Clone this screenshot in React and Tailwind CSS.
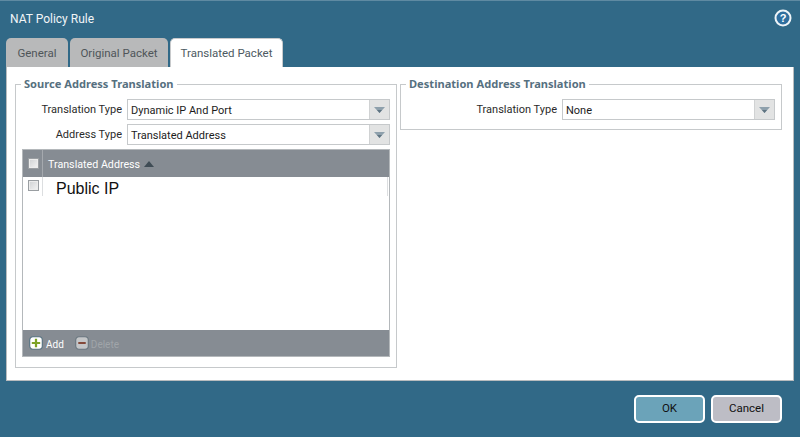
const ui = { fontFamily: 'Roboto, "Noto Sans", sans-serif' };

function Select({ value, className }) {
  return (
    <div className={`flex h-[21px] border border-[#c6c9cb] bg-white ${className}`}>
      <div className="flex-1 pl-[3px] text-[11px] leading-[22px] text-[#1c1c1c]">{value}</div>
      <div className="flex w-5 items-center justify-center border-l border-[#d0d2d3] bg-[#e2e3e3]">
        <svg width="11" height="6" viewBox="0 0 11 6">
          <path d="M0 0H11L5.5 6Z" fill="#8ea0ac" />
          <path d="M3 3H8L5.5 6Z" fill="#5f7482" />
        </svg>
      </div>
    </div>
  );
}

function Row({ label, value, labelW, selectW, className = "" }) {
  return (
    <div className={`flex items-center ${className}`}>
      <div className={`${labelW} pr-[5px] pt-[2px] text-right text-[11px] text-[#2b2b2b]`}>{label}</div>
      <Select value={value} className={selectW} />
    </div>
  );
}

function Check({ className = "" }) {
  return <div className={`h-[11px] w-[11px] border border-[#9a9ea2] bg-gradient-to-br from-[#cfd1d3] to-[#f4f4f4] shadow-[inset_0_0_0_1px_#ececec] ${className}`} />;
}

function Legend({ children }) {
  return <legend className="-ml-[1px] px-[3px] text-[11.1px] font-bold leading-[14px] text-[#56707f]" style={{ fontFamily: '"Noto Sans", sans-serif' }}>{children}</legend>;
}

function Tab({ active, children, className }) {
  return (
    <div className={`flex h-[29px] items-center justify-center rounded-t-[5px] pt-[2px] text-[11.5px] ${className} ${active ? "border border-b-0 border-[#c8cacc] bg-white text-[#4d5a62]" : "bg-[#b8b9ba] text-[#4f5559]"}`}>
      {children}
    </div>
  );
}

export default function App() {
  return (
    <div className="flex h-[437px] w-[800px] flex-col overflow-hidden border-t border-[#5f8aa2] bg-[#316987]" style={ui}>
      <div className="flex h-[37px] items-start justify-between pl-[10px] pr-[8px] pt-[8px]">
        <div className="pt-[1px] text-[12px] leading-[19px] text-[#f1f5f7]">NAT Policy Rule</div>
        <svg width="18" height="18" viewBox="0 0 18 18">
          <circle cx="9" cy="9" r="7.5" fill="#2f6f9f" stroke="#eef4f8" strokeWidth="2" />
          <text x="9" y="13" textAnchor="middle" fontSize="11" fontWeight="700" fill="#ffffff" fontFamily="Liberation Sans, sans-serif">?</text>
        </svg>
      </div>

      <div className="flex pl-[6px]">
        <Tab className="w-[62px]">General</Tab>
        <Tab className="ml-[2px] w-[98px]">Original Packet</Tab>
        <Tab active className="ml-[2px] w-[113px]">Translated Packet</Tab>
      </div>

      <div className="mx-[6px] flex h-[314px] gap-[3px] border-x border-b border-[#b9bcbe] bg-white pl-[8px] pt-[10px]">
        <fieldset className="h-[291px] w-[382px] border border-[#c6c9cb] px-[6px]">
          <Legend>Source Address Translation</Legend>
          <Row className="mt-[8px]" label="Translation Type" value="Dynamic IP And Port" labelW="w-[105px]" selectW="w-[263px]" />
          <Row className="mt-[4px]" label="Address Type" value="Translated Address" labelW="w-[105px]" selectW="w-[263px]" />
          <div className="mt-[4px] flex h-[208px] w-[368px] flex-col border border-[#b4b8bb] bg-white">
            <div className="flex h-[27px] items-center bg-[#868c93]">
              <div className="flex h-full w-[20px] items-center justify-center border-r border-[#a5a9ae] pl-[1px]"><Check /></div>
              <div className="pl-[5px] pt-[4px] text-[10.7px] text-white">Translated Address</div>
              <svg className="ml-[4px]" width="10" height="6" viewBox="0 0 10 6"><path d="M0 6H10L5 0Z" fill="#3f4c55" /></svg>
            </div>
            <div className="flex-1">
              <div className="flex">
                <div className="flex h-[19px] w-[20px] justify-center border-r border-[#dcdee0] pl-[1px] pt-[3px]"><Check /></div>
                <div className="ml-[3px] h-[24px] w-[83px] bg-white pl-[10px] text-[16px] leading-[23px] text-[#111]" style={{ fontFamily: '"Liberation Sans", sans-serif' }}>Public IP</div>
                <div className="ml-auto mr-[1px] h-[19px] border-r border-[#dcdee0]" />
              </div>
            </div>
            <div className="flex h-[26px] items-center bg-[#868c93] pl-[6px]">
              <svg width="14" height="14" viewBox="0 0 15 15">
                <rect x="0.75" y="0.75" width="13.5" height="13.5" rx="3.5" fill="#fff" stroke="#54707f" strokeWidth="1.2" />
                <path d="M7.5 3V12M3 7.5H12" stroke="#7da228" strokeWidth="2.4" />
              </svg>
              <span className="ml-[3px] pt-[2px] text-[10px] text-white">Add</span>
              <svg className="ml-[11px]" width="14" height="14" viewBox="0 0 15 15">
                <rect x="0.75" y="0.75" width="13.5" height="13.5" rx="3.5" fill="#c4c6c8" stroke="#69767f" strokeWidth="1.2" />
                <path d="M3.5 7.5H11.5" stroke="#84493a" strokeWidth="2.2" />
              </svg>
              <span className="ml-[2px] pt-[2px] text-[10px] text-[#a0a5a9]">Delete</span>
            </div>
          </div>
        </fieldset>

        <fieldset className="h-[53px] w-[382px] border border-[#c6c9cb] px-[6px]">
          <Legend>Destination Address Translation</Legend>
          <Row className="mt-[8px]" label="Translation Type" value="None" labelW="w-[155px]" selectW="w-[213px]" />
        </fieldset>
      </div>

      <div className="flex justify-end gap-[6px] pr-[18px] pt-[14px]">
        <button className="h-[28px] w-[71px] rounded-[5px] border-2 border-white bg-[#6ba3b9] text-[11.5px] text-[#111]">OK</button>
        <button className="h-[28px] w-[71px] rounded-[5px] border-2 border-white bg-[#bdbdc5] text-[11.5px] text-[#111]">Cancel</button>
      </div>
    </div>
  );
}
